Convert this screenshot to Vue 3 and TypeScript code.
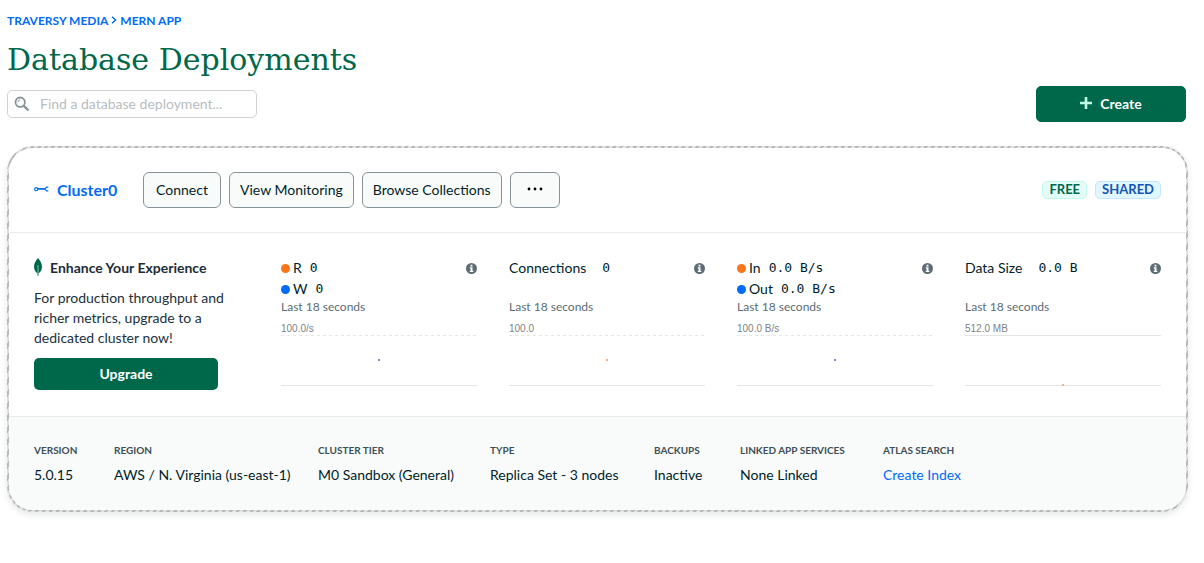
<script setup lang="ts">
import { ref } from 'vue'

interface Series {
  label: string
  value: string
  dot?: 'orange' | 'blue'
}

interface Metric {
  id: string
  series: Series[]
  max: string
  solid: boolean
  point: 'mid-blue' | 'mid-orange' | 'low-orange'
}

interface Detail {
  label: string
  value: string
  link?: boolean
}

const query = ref('')

const metrics: Metric[] = [
  {
    id: 'ops',
    series: [
      { label: 'R', value: '0', dot: 'orange' },
      { label: 'W', value: '0', dot: 'blue' },
    ],
    max: '100.0/s',
    solid: false,
    point: 'mid-blue',
  },
  { id: 'connections', series: [{ label: 'Connections', value: '0' }], max: '100.0', solid: false, point: 'mid-orange' },
  {
    id: 'network',
    series: [
      { label: 'In', value: '0.0 B/s', dot: 'orange' },
      { label: 'Out', value: '0.0 B/s', dot: 'blue' },
    ],
    max: '100.0 B/s',
    solid: false,
    point: 'mid-blue',
  },
  { id: 'size', series: [{ label: 'Data Size', value: '0.0 B' }], max: '512.0 MB', solid: true, point: 'low-orange' },
]

const details: Detail[] = [
  { label: 'Version', value: '5.0.15' },
  { label: 'Region', value: 'AWS / N. Virginia (us-east-1)' },
  { label: 'Cluster Tier', value: 'M0 Sandbox (General)' },
  { label: 'Type', value: 'Replica Set - 3 nodes' },
  { label: 'Backups', value: 'Inactive' },
  { label: 'Linked App Services', value: 'None Linked' },
  { label: 'Atlas Search', value: 'Create Index', link: true },
]
</script>

<template>
  <main class="page">
    <nav class="crumbs" aria-label="Breadcrumb">
      <a href="#">TRAVERSY MEDIA</a>
      <svg width="6" height="8" viewBox="0 0 6 8" aria-hidden="true"><path d="M1 .8 4.6 4 1 7.2" fill="none" stroke="currentColor" stroke-width="1.5" /></svg>
      <a href="#">MERN APP</a>
    </nav>
    <h1>Database Deployments</h1>

    <div class="toolbar">
      <label class="search">
        <svg width="16" height="16" viewBox="0 0 16 16" aria-hidden="true">
          <circle cx="6.2" cy="6.2" r="4.7" fill="none" stroke="#889397" stroke-width="1.8" />
          <path d="M3.9 6.1a2.3 2.3 0 0 1 2.2-2.2" fill="none" stroke="#889397" />
          <path d="m9.8 9.8 4.7 4.7" stroke="#889397" stroke-width="2.4" />
        </svg>
        <input v-model="query" type="text" placeholder="Find a database deployment..." aria-label="Find a database deployment" />
      </label>
      <button class="create" type="button">
        <svg width="12" height="12" viewBox="0 0 12 12" aria-hidden="true"><path d="M6 0v12M0 6h12" stroke="#c0fae6" stroke-width="2.6" /></svg>
        Create
      </button>
    </div>

    <section class="card">
      <div class="inner">
        <header class="head">
          <a class="cluster" href="#">
            <svg width="15" height="8" viewBox="0 0 15 8" fill="none" stroke="currentColor" aria-hidden="true">
              <circle cx="2.2" cy="4.2" r="1.6" stroke-width="1.1" />
              <path d="M3.8 3.8h7" stroke-width="1.7" />
              <path d="M14.3 2.2h-1.8l-1.5 1.8 1.5 1.8h1.8" stroke-width="1.2" />
            </svg>
            Cluster0
          </a>
          <div class="actions">
            <button type="button">Connect</button>
            <button type="button">View Monitoring</button>
            <button type="button">Browse Collections</button>
            <button type="button" class="more" aria-label="More actions">
              <svg width="16" height="4" viewBox="0 0 16 4" aria-hidden="true"><circle cx="2" cy="2" r="1.4" /><circle cx="8" cy="2" r="1.4" /><circle cx="14" cy="2" r="1.4" /></svg>
            </button>
          </div>
          <div class="badges">
            <span class="badge free">FREE</span>
            <span class="badge shared">SHARED</span>
          </div>
        </header>

        <div class="body">
          <div class="promo">
            <h2>
              <svg width="8" height="18" viewBox="0 0 8 18" aria-hidden="true">
                <path d="M4 0C5.8 2.3 8 4.8 8 8.8c0 3-1.5 5.1-3.5 6.7L4.3 18h-.6l-.2-2.5C1.5 13.9 0 11.8 0 8.8 0 4.8 2.2 2.3 4 0Z" fill="#00684a" />
                <path d="M4 7v11" stroke="#7fc8a3" />
              </svg>
              Enhance Your Experience
            </h2>
            <p>For production throughput and richer metrics, upgrade to a dedicated cluster now!</p>
            <button class="upgrade" type="button">Upgrade</button>
          </div>

          <div v-for="metric in metrics" :key="metric.id" class="metric">
            <div class="legend">
              <div v-for="item in metric.series" :key="item.label" class="series" :class="{ plain: !item.dot }">
                <i v-if="item.dot" class="dot" :class="item.dot"></i>
                <span>{{ item.label }}</span>
                <b>{{ item.value }}</b>
              </div>
              <svg class="info" width="11" height="11" viewBox="0 0 11 11" role="img" aria-label="Information">
                <circle cx="5.5" cy="5.5" r="5.5" fill="#5c6c75" />
                <path d="M4.5 1.7h2v1.7h-2zM3.8 4.3h2.7v3.5h.8V9H3.8V7.8h.8V5.5h-.8z" fill="#fff" />
              </svg>
            </div>
            <div class="period">Last 18 seconds</div>
            <div class="max">{{ metric.max }}</div>
            <svg class="chart" width="100%" height="51" aria-hidden="true">
              <line x1="0" y1=".5" x2="100%" y2=".5" stroke="#e3e5e6" :stroke-dasharray="metric.solid ? undefined : '3 3'" />
              <line x1="0" y1="50.5" x2="100%" y2="50.5" stroke="#e3e5e6" />
              <rect x="50%" :y="metric.point === 'low-orange' ? 49 : 24" width="2" height="2" transform="translate(-1 0)" :fill="metric.point === 'mid-blue' ? '#7890c8' : '#f8b183'" />
            </svg>
          </div>
        </div>

        <dl class="details">
          <div v-for="detail in details" :key="detail.label">
            <dt>{{ detail.label }}</dt>
            <dd>
              <a v-if="detail.link" href="#">{{ detail.value }}</a>
              <template v-else>{{ detail.value }}</template>
            </dd>
          </div>
        </dl>
      </div>
    </section>
  </main>
</template>

<style>
body {
  background: #fff;
}
</style>

<style scoped>
* {
  box-sizing: border-box;
}

.page {
  padding: 11px 16px 48px 7px;
  color: #001e2b;
  font-family: Lato, "Liberation Sans", sans-serif;
  font-size: 14px;
}

a {
  color: #016bf8;
  text-decoration: none;
}

button,
input {
  font: inherit;
}

button {
  padding: 0 0 2px;
}

.crumbs {
  display: flex;
  align-items: center;
  gap: 3px;
  height: 18px;
  color: #016bf8;
  font-size: 12px;
  font-weight: 700;
}

h1 {
  margin: 11px 0 6px;
  color: #00684a;
  font-family: "DejaVu Serif", serif;
  font-size: 30px;
  font-weight: 400;
  line-height: 40px;
}

.toolbar {
  display: flex;
  align-items: flex-start;
  justify-content: space-between;
  margin: 0 2px 24px 0;
}

.search {
  display: flex;
  align-items: center;
  gap: 10px;
  width: 250px;
  height: 28px;
  margin-top: 4px;
  padding: 0 6px;
  border: 1px solid #d0d3d4;
  border-radius: 5px;
}

.search input {
  flex: 1;
  min-width: 0;
  padding: 0 0 2px;
  border: 0;
  outline: 0;
  background: none;
}

.search input::placeholder {
  color: #b8bdbf;
  opacity: 1;
}

.create {
  display: flex;
  align-items: center;
  justify-content: center;
  gap: 8px;
  width: 150px;
  height: 36px;
  border: 1px solid #00684a;
  border-radius: 5px;
  background: #00684a;
  color: #fff;
  font-weight: 700;
}

.card {
  padding: 2px;
  border-radius: 26px;
  background: repeating-linear-gradient(-60deg, #b8baba 0 3px, #dfe1e1 3px 6px);
  box-shadow: 0 3px 6px rgb(0 30 43 / 10%);
}

.inner {
  overflow: hidden;
  border-radius: 24px;
  background: #fff;
}

.head {
  display: flex;
  align-items: center;
  height: 85px;
  padding: 0 25px;
  border-bottom: 1px solid #e8edeb;
}

.cluster {
  display: flex;
  align-items: center;
  gap: 8px;
  width: 109px;
  padding-bottom: 2px;
  font-size: 16px;
  font-weight: 700;
}

.actions {
  display: flex;
  gap: 8px;
}

.actions button {
  min-width: 78px;
  height: 36px;
  padding: 0 10px 2px;
  border: 1px solid #889397;
  border-radius: 6px;
  background: #f9fbfa;
  color: #001e2b;
}

.actions .more {
  min-width: 0;
  padding: 0 16px 2px;
}

.more svg {
  display: block;
}

.badges {
  display: flex;
  gap: 8px;
  margin-left: auto;
}

.badge {
  height: 18px;
  padding: 0 6px;
  border: 1px solid;
  border-radius: 5px;
  font-size: 13px;
  font-weight: 700;
  line-height: 15px;
}

.free {
  border-color: #c0fae6;
  background: #e3fcf7;
  color: #00684a;
}

.shared {
  border-color: #c3e7fe;
  background: #e1f7ff;
  color: #1254b7;
}

.body {
  display: grid;
  grid-template-columns: 215px repeat(4, minmax(0, 1fr));
  column-gap: 32px;
  padding: 24px 25px 26px;
}

h2 {
  display: flex;
  align-items: center;
  gap: 8px;
  height: 20px;
  margin: 0 0 11px;
  color: #1c2d38;
  font-size: 14px;
}

.promo p {
  max-width: 200px;
  margin: 0 0 10px;
  color: #21313c;
  line-height: 20px;
}

.upgrade {
  width: 184px;
  height: 32px;
  border: 0;
  border-radius: 5px;
  background: #00684a;
  color: #fff;
  font-weight: 700;
}

.legend {
  position: relative;
  height: 42px;
}

.series {
  display: flex;
  align-items: center;
  gap: 8px;
  height: 21px;
}

.series.plain {
  gap: 16px;
}

.series b {
  font-family: "DejaVu Sans Mono", monospace;
  font-size: 13px;
  font-weight: 400;
}

.dot {
  width: 9px;
  height: 9px;
  margin: 2px -5px 0 0;
  border-radius: 50%;
}

.dot.orange {
  background: #fb7418;
}

.dot.blue {
  background: #016bf8;
}

.info {
  position: absolute;
  top: 6px;
  right: 0;
}

.period {
  color: #5c6c75;
  font-size: 12px;
  line-height: 16px;
}

.max {
  padding: 9px 0 1px;
  color: #7b8488;
  font-family: "Liberation Sans", Arial, sans-serif;
  font-size: 10px;
  line-height: 10px;
}

.chart {
  display: block;
}

.details {
  display: grid;
  grid-template-columns: 44px 168px 136px 128px 50px 107px auto;
  column-gap: 36px;
  height: 94px;
  margin: 0;
  padding: 25px 25px 0;
  border-top: 1px solid #e8edeb;
  background: #f9fbfa;
  white-space: nowrap;
}

dt {
  color: #3d4f58;
  font-size: 10px;
  font-weight: 700;
  line-height: 16px;
  text-transform: uppercase;
}

dd {
  margin: 7px 0 0;
  line-height: 20px;
}
</style>
